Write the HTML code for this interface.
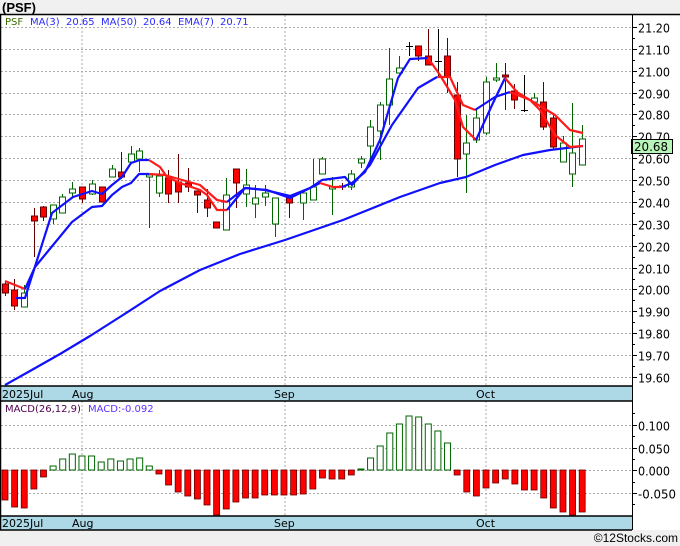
<!DOCTYPE html>
<html><head><meta charset="utf-8"><style>
html,body{margin:0;padding:0;background:#f0f0f0;}
svg{display:block;font-family:"Liberation Sans",sans-serif;}
</style></head><body>
<svg id="s" width="680" height="546" viewBox="0 0 680 546" xmlns="http://www.w3.org/2000/svg">
<rect x="0" y="0" width="680" height="546" fill="#f0f0f0"/>
<rect x="0" y="14" width="680" height="516" fill="#fff"/>
<text x="2" y="12" font-size="13" font-weight="bold" fill="#000">(PSF)</text>
<g id="g"></g>
<rect x="0" y="386" width="632" height="15" fill="#add8e6"/>
<rect x="0" y="516" width="632" height="14" fill="#add8e6"/>
<line x1="0" y1="386" x2="632" y2="386" stroke="#000" stroke-width="1.5"/>
<line x1="0" y1="401" x2="632" y2="401" stroke="#000" stroke-width="1.5"/>
<line x1="0" y1="516" x2="632" y2="516" stroke="#000" stroke-width="1.5"/>
<line x1="0" y1="530" x2="632" y2="530" stroke="#000" stroke-width="1.5"/>
<line x1="0" y1="14.5" x2="680" y2="14.5" stroke="#000" stroke-width="1.5"/>
<line x1="632.5" y1="14" x2="632.5" y2="530" stroke="#000" stroke-width="1"/>
<line x1="0.5" y1="14" x2="0.5" y2="530" stroke="#000" stroke-width="1.5"/>
<g font-size="11" fill="#000" font-family="DejaVu Sans, sans-serif">
<text x="2" y="398">2025Jul</text><text x="72" y="398">Aug</text><text x="274" y="398">Sep</text><text x="476" y="398">Oct</text>
<text x="2" y="527">2025Jul</text><text x="72" y="527">Aug</text><text x="274" y="527">Sep</text><text x="476" y="527">Oct</text>
</g>
<g font-size="10" font-family="DejaVu Sans, sans-serif">
<text x="5" y="25" fill="#3a6a00">PSF</text>
<g fill="#2a2aff"><text x="30" y="25">MA(3)</text><text x="66" y="25">20.65</text><text x="101" y="25">MA(50)</text><text x="143" y="25">20.64</text><text x="178" y="25">EMA(7)</text><text x="220" y="25">20.71</text></g>
<text x="5" y="412" fill="#500050">MACD(26,12,9)</text>
<text x="88" y="412" fill="#6030ff">MACD:-0.092</text>
</g>
<text x="678" y="542" font-size="12" text-anchor="end" fill="#000">©12Stocks.com</text>
</svg>
<script>
var g=document.getElementById('g'),h='';
function Y(p){return 27+(21.2-p)*218.75;}
[82,285,486].forEach(function(x){h+='<line x1="'+x+'" y1="15" x2="'+x+'" y2="386" stroke="#aaa" stroke-dasharray="2,2"/><line x1="'+x+'" y1="401" x2="'+x+'" y2="516" stroke="#aaa" stroke-dasharray="2,2"/>';});
for(var k=0;k<=16;k++){var p=21.2-k*0.1,y=Math.round(Y(p))+0.5;h+='<line x1="1" y1="'+y+'" x2="632" y2="'+y+'" stroke="#aaa" stroke-dasharray="2,2"/><line x1="632" y1="'+y+'" x2="637" y2="'+y+'" stroke="#000"/><text x="638" y="'+(y+5)+'" font-size="12" fill="#000" font-family="DejaVu Sans, sans-serif" textLength="32" lengthAdjust="spacingAndGlyphs">'+p.toFixed(2)+'</text>';
 var ym=Math.round(Y(p-0.05))+0.5; if(ym<384) h+='<line x1="632" y1="'+ym+'" x2="635" y2="'+ym+'" stroke="#000"/>';}
[[425,'0.100'],[447.5,'0.050'],[470,'0.000'],[493,'-0.050']].forEach(function(a){var y=Math.round(a[0])+0.5;var neg=a[1][0]=='-';h+='<line x1="1" y1="'+y+'" x2="632" y2="'+y+'" stroke="#aaa" stroke-dasharray="2,2"/><line x1="632" y1="'+y+'" x2="637" y2="'+y+'" stroke="#000"/><text x="'+(neg?638:638)+'" y="'+(y+5)+'" font-size="12" fill="#000" font-family="DejaVu Sans, sans-serif" textLength="'+(neg?38:32)+'" lengthAdjust="spacingAndGlyphs">'+a[1]+'</text>';});
[413,436,459,482,504].forEach(function(y){h+='<line x1="632" y1="'+(y+.5)+'" x2="635" y2="'+(y+.5)+'" stroke="#000"/>';});
var mv=[500,507,508,489,477,-466,-459,-454,-456,-456,-462,-459,-461,-459,-458,-466,474,485,492,496,499,505,515,509,502,498,498,495,495,495,495,494,489,478,479,479,475,-469,-458,-446,-433,-424,-416,-417,-424,-431,-443,475,492,496,488,483,479,484,490,490,498,508,512,515,512];
for(var i=0;i<mv.length;i++){var x=5+i*9.62,v=mv[i];
 if(v>0){h+='<rect x="'+(x-3)+'" y="470" width="6" height="'+(v-470)+'" fill="#f00" stroke="#600" stroke-width="0.8"/>';}
 else{v=-v;h+='<rect x="'+(x-3)+'" y="'+v+'" width="6" height="'+Math.max(1,470-v)+'" fill="#fff" stroke="#060" stroke-width="1"/>';}}
var c=[[5,284,293,281,296,'r'],[14,290,306,279,310,'r'],[24,293,307,285,307,'g'],[34,216,221,208,257,'r'],[43,207,217,206,221,'r'],[53,205,219,205,224,'g'],[62,197,213,194,213,'g'],[72,189,193,182,197,'g'],[82,187,199,187,203,'r'],[92,184,194,180,195,'g'],[102,187,202,187,202,'r'],[112,169,177,165,177,'g'],[121,172,177,152,179,'r'],[131,154,162,146,162,'g'],[139,151,159,148,172,'g'],[149,175,177,175,228,'g'],[159,176,193,170,197,'g'],[168,178,194,170,203,'r'],[178,182,192,154,203,'r'],[188,183,187,168,192,'r'],[197,191,195,191,213,'r'],[207,200,208,189,217,'r'],[216,222,228,222,228,'r'],[226,195,230,178,230,'g'],[236,169,183,169,208,'r'],[246,185,194,169,207,'g'],[255,198,204,185,218,'g'],[265,193,197,185,206,'g'],[275,198,224,198,237,'g'],[289,198,203,195,218,'r'],[303,193,203,193,220,'g'],[313,187,200,159,200,'g'],[322,159,174,157,174,'g'],[332,187,189,177,215,'g'],[342,186,187,183,190,'r'],[351,174,187,170,190,'g'],[361,159,163,156,168,'g'],[370,127,146,120,160,'g'],[380,105,131,102,160,'g'],[389,79,105,48,125,'g'],[399,68,73,56,73,'g'],[409,46,46,42,56,'k'],[418,46,56,46,61,'r'],[428,56,65,29,65,'r'],[438,61,61,29,77,'k'],[447,56,77,38,93,'r'],[457,95,159,82,177,'r'],[466,143,154,115,193,'g'],[476,118,140,108,143,'g'],[486,82,133,77,135,'g'],[496,78,80,63,82,'g'],[505,75,77,63,110,'r'],[514,91,100,84,109,'r'],[524,110,110,75,112,'k'],[534,98,102,93,103,'g'],[543,102,127,82,130,'r'],[553,118,147,113,150,'r'],[563,143,162,136,162,'g'],[572,153,174,103,187,'g'],[582,139,165,125,165,'g']];
c.forEach(function(a){var x=a[0],col=a[5]=='r'?'#600':(a[5]=='g'?'#060':'#000');
 h+='<line x1="'+(x+.5)+'" y1="'+a[3]+'" x2="'+(x+.5)+'" y2="'+a[4]+'" stroke="'+col+'" stroke-width="1"/>';
 if(a[5]=='k'){h+='<line x1="'+(x-3)+'" y1="'+(a[1]+.5)+'" x2="'+(x+4)+'" y2="'+(a[1]+.5)+'" stroke="#000"/>';}
 else h+='<rect x="'+(x-2.5)+'" y="'+a[1]+'" width="6" height="'+Math.max(1,a[2]-a[1])+'" fill="'+(a[5]=='r'?'#f00':'#fff')+'" stroke="'+col+'" stroke-width="1"/>';});
function pl(pts,col){h+='<polyline points="'+pts.map(function(p){return p.join(',')}).join(' ')+'" fill="none" stroke="'+col+'" stroke-width="2.2" stroke-linejoin="round"/>';}
pl([[5,385],[30,371],[60,354],[90,336],[123,315],[160,291],[200,270],[240,254],[285,240],[343,220],[400,197],[440,183],[466,177],[495,165],[523,155],[550,150],[583,146]],'#1010ff');
pl([[16,298],[25,298],[52,213],[73,197],[92,191],[102,194],[112,185],[122,177],[131,163],[140,160],[149,160]],'#1010ff');
pl([[149,160],[160,167],[167,177],[180,183],[200,190],[207,195],[217,210],[227,210]],'#ff1a1a');
pl([[227,210],[245,188],[267,190],[290,198],[320,183]],'#1010ff');
pl([[320,183],[333,187],[342,187]],'#ff1a1a');
pl([[342,187],[352,183],[365,172],[380,140],[398,78],[410,59],[428,58]],'#1010ff');
pl([[428,58],[440,75],[455,100],[463,127],[476,140]],'#ff1a1a');
pl([[476,140],[493,103],[505,78]],'#1010ff');
pl([[505,78],[517,92],[530,100],[540,110],[555,135],[570,147],[583,146]],'#ff1a1a');
pl([[5,281],[25,289]],'#ff1a1a');
pl([[25,289],[35,267],[72,222],[92,207],[102,206],[112,195],[122,187],[131,183],[139,174],[149,174]],'#1010ff');
pl([[149,174],[165,175],[175,178],[200,185],[217,200],[227,202]],'#ff1a1a');
pl([[227,202],[245,188],[265,190],[290,196],[310,188],[322,180],[345,177],[352,185],[370,165],[392,125],[418,88],[437,77]],'#1010ff');
pl([[437,77],[450,77],[463,105],[475,110]],'#ff1a1a');
pl([[475,110],[495,97],[510,92]],'#1010ff');
pl([[510,92],[530,100],[555,115],[570,130],[583,133]],'#ff1a1a');
h+='<rect x="631.5" y="139.5" width="41" height="14" fill="#b8f5b8" stroke="#000"/><text x="634" y="151" font-size="12" fill="#000" font-family="DejaVu Sans, sans-serif" textLength="34" lengthAdjust="spacingAndGlyphs">20.68</text>';
g.innerHTML=h;
</script>
</body></html>
